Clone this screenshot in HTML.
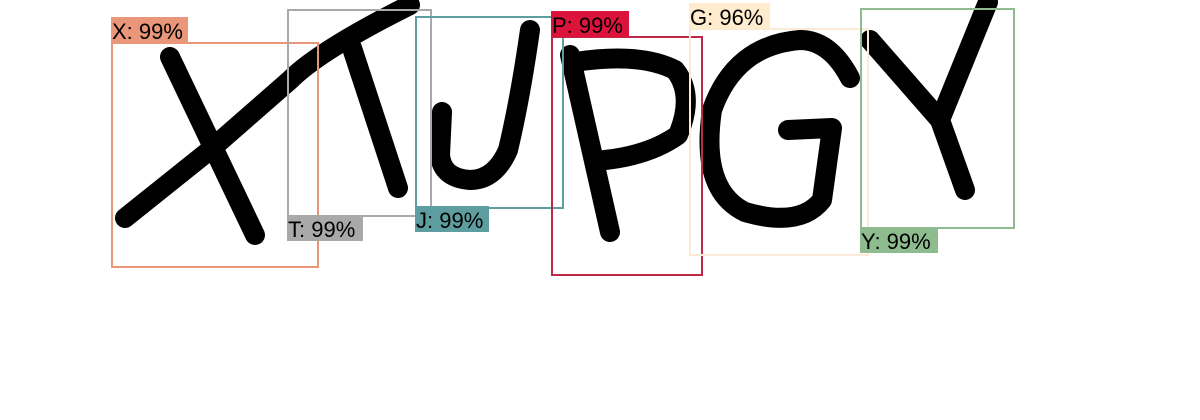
<!DOCTYPE html>
<html><head><style>
html,body{margin:0;padding:0;background:#fff;width:1200px;height:420px;overflow:hidden}
.b{position:absolute;box-sizing:border-box;border:2px solid}
.l{position:absolute;font:22px/30px "Liberation Sans",sans-serif;color:#000;height:26px;white-space:nowrap;overflow:hidden;padding-left:1px;box-sizing:border-box}
</style></head><body>
<svg width="1200" height="420" style="position:absolute;left:0;top:0" fill="none" stroke="#000" stroke-width="20" stroke-linecap="round" stroke-linejoin="round">
<path d="M170 57 L255 235"/>
<path d="M125 218 L210 150 L290 80 Q320 50 410 5"/>
<path d="M352 48 L398 188"/>
<path d="M530 30 Q520 100 508 150 Q495 180 470 180 Q442 178 440 155 L442 112"/>
<path d="M570 55 L610 232"/>
<path d="M575 62 Q640 52 675 70 Q695 95 678 135 Q650 155 605 160"/>
<path d="M850 78 Q830 40 800 40 Q735 45 712 110 Q700 190 745 212 Q800 228 822 200 L832 128 L788 130"/>
<path d="M870 40 L940 120 L988 2"/>
<path d="M940 120 L965 190"/>
</svg>
<div class="b" style="left:111px;top:42px;width:208px;height:226px;border-color:#E9967A"></div>
<div class="l" style="left:111px;top:17px;width:77px;background:#E9967A">X: 99%</div>
<div class="b" style="left:287px;top:9px;width:145px;height:208px;border-color:#A9A9A9"></div>
<div class="l" style="left:287px;top:215px;width:76px;background:#A9A9A9">T: 99%</div>
<div class="b" style="left:415px;top:16px;width:149px;height:193px;border-color:#5F9EA0"></div>
<div class="l" style="left:415px;top:206px;width:74px;background:#5F9EA0">J: 99%</div>
<div class="b" style="left:551px;top:36px;width:152px;height:240px;border-color:#C0284A"></div>
<div class="l" style="left:551px;top:11px;width:78px;background:#DC143C">P: 99%</div>
<div class="b" style="left:689px;top:28px;width:180px;height:228px;border-color:#FAEBD7"></div>
<div class="l" style="left:689px;top:3px;width:81px;background:#FFEBCD">G: 96%</div>
<div class="b" style="left:860px;top:8px;width:155px;height:221px;border-color:#8FBC8F"></div>
<div class="l" style="left:860px;top:227px;width:78px;background:#8FBC8F">Y: 99%</div>
</body></html>
